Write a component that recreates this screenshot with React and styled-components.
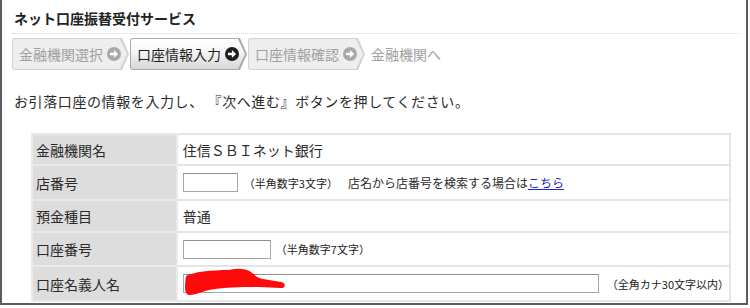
import React from 'react'
import styled, { createGlobalStyle } from 'styled-components'

const GlobalStyle = createGlobalStyle`
  body {
    margin: 0;
    background: #fff;
    font-family: "Noto Sans CJK JP", "Noto Sans", sans-serif;
  }
`

const FrameStl = styled.div`
  width: 748px;
  height: 305px;
  box-sizing: border-box;
  border: 2px solid #5c5c5c;
  border-top: none;
  padding: 0 6px 0 10px;
  overflow: hidden;
`

const TitleStl = styled.h1`
  margin: 0;
  padding: 10px 0 6px 2px;
  font-size: 14px;
  line-height: 17px;
  font-weight: 700;
  color: #222;
  border-bottom: 1px dotted #d6d6d6;
`

const StepsStl = styled.div`
  display: flex;
  align-items: center;
  gap: 1px;
  margin-top: 4px;
  height: 32px;
`

const chevron = `polygon(0 0, calc(100% - 7px) 0, 100% 50%, calc(100% - 7px) 100%, 0 100%)`

const StepOuterStl = styled.div`
  width: 117px;
  height: 32px;
  padding: 1px 2px 1px 1px;
  box-sizing: border-box;
  background: ${p => (p.$active ? '#aaaaaa' : '#d2d2d2')};
  border-radius: 3px 0 0 3px;
  clip-path: ${chevron};
`

const StepInnerStl = styled.div`
  height: 100%;
  display: flex;
  align-items: center;
  gap: 4px;
  padding-left: 6px;
  border-radius: 2px 0 0 2px;
  clip-path: ${chevron};
  background: ${p => (p.$active ? 'linear-gradient(#ffffff, #f6f6f6 40%, #d6d6d6)' : '#eeeeee')};
  color: ${p => (p.$active ? '#1e1e1e' : '#a0a0a0')};
  font-size: 14px;
  white-space: nowrap;
`

const StepLastStl = styled.div`
  margin-left: 5px;
  font-size: 14px;
  color: #a0a0a0;
`

const LeadStl = styled.p`
  margin: 22px 0 0 2px;
  font-size: 14px;
  line-height: 18px;
  letter-spacing: 0.6px;
  color: #2a2a2a;
`

const TableStl = styled.table`
  margin: 23px 0 0 19px;
  width: 700px;
  border-collapse: collapse;
  border: 2px solid #e4e4e4;
  font-size: 14px;
  color: #2a2a2a;
`

const LabelStl = styled.th`
  width: 146px;
  height: ${p => p.$h}px;
  box-sizing: border-box;
  padding: 0 0 0 3px;
  text-align: left;
  font-weight: 400;
  background: #dddddd;
  border: 2px solid #e9e9e9;
`

const ValueStl = styled.td`
  padding: 0 0 0 5px;
  border: 2px solid #e4e4e4;
  white-space: nowrap;
`

const FieldStl = styled.div`
  position: relative;
  display: flex;
  align-items: center;
`

const InputStl = styled.input`
  width: ${p => p.$w}px;
  height: 19px;
  box-sizing: border-box;
  border: 1px solid #a6a6a6;
  border-top-color: #8f8f8f;
  background: #fff;
  padding: 0 3px;
  margin: 0;
`

const HintStl = styled.span`
  margin-left: ${p => p.$gap}px;
  font-size: 11px;
  color: #222;
`

const NoteStl = styled.span`
  margin-left: 10px;
  font-size: 12px;
  color: #2a2a2a;

  a {
    color: #2323c8;
    text-decoration: underline;
  }
`

const ScribbleStl = styled.svg`
  position: absolute;
  left: 0;
  top: -8px;
`

const ArrowIcon = ({ color }) => (
  <svg width="14" height="14" viewBox="0 0 14 14">
    <circle cx="7" cy="7" r="7" fill={color} />
    <path d="M2.9 5.7h4V3l4.2 4-4.2 4V8.3h-4z" fill="#fff" />
  </svg>
)

const Step = ({ label, active }) => (
  <StepOuterStl $active={active}>
    <StepInnerStl $active={active}>
      {label}
      <ArrowIcon color={active ? '#1e1e1e' : '#a8a8a8'} />
    </StepInnerStl>
  </StepOuterStl>
)

export default function App() {
  return (
    <>
      <GlobalStyle />
      <FrameStl>
        <TitleStl>ネット口座振替受付サービス</TitleStl>

        <StepsStl>
          <Step label="金融機関選択" />
          <Step label="口座情報入力" active />
          <Step label="口座情報確認" />
          <StepLastStl>金融機関へ</StepLastStl>
        </StepsStl>

        <LeadStl>お引落口座の情報を入力し、 『次へ進む』ボタンを押してください。</LeadStl>

        <TableStl>
          <tbody>
            <tr>
              <LabelStl $h={31}>金融機関名</LabelStl>
              <ValueStl>住信ＳＢＩネット銀行</ValueStl>
            </tr>
            <tr>
              <LabelStl $h={35}>店番号</LabelStl>
              <ValueStl>
                <FieldStl>
                  <InputStl $w={55} />
                  <HintStl $gap={6}>（半角数字3文字）</HintStl>
                  <NoteStl>
                    店名から店番号を検索する場合は<a href="#">こちら</a>
                  </NoteStl>
                </FieldStl>
              </ValueStl>
            </tr>
            <tr>
              <LabelStl $h={32}>預金種目</LabelStl>
              <ValueStl>普通</ValueStl>
            </tr>
            <tr>
              <LabelStl $h={34}>口座番号</LabelStl>
              <ValueStl>
                <FieldStl>
                  <InputStl $w={88} />
                  <HintStl $gap={5}>（半角数字7文字）</HintStl>
                </FieldStl>
              </ValueStl>
            </tr>
            <tr>
              <LabelStl $h={35}>口座名義人名</LabelStl>
              <ValueStl>
                <FieldStl>
                  <InputStl $w={416} />
                  <HintStl $gap={8}>（全角カナ30文字以内）</HintStl>
                  <ScribbleStl width="110" height="34" viewBox="0 0 110 34">
                    <path
                      d="M3 10 C 10 6, 28 4, 46 4 C 54 2, 62 2, 68 6 C 72 9, 74 12, 80 13 L 98 16 C 103 17, 103 22, 98 22 L 76 21 C 60 21, 44 21, 26 24 C 18 26, 12 29, 7 29 C 2 29, 1 24, 3 10 Z"
                      fill="#ff0a0a"
                    />
                  </ScribbleStl>
                </FieldStl>
              </ValueStl>
            </tr>
          </tbody>
        </TableStl>
      </FrameStl>
    </>
  )
}
